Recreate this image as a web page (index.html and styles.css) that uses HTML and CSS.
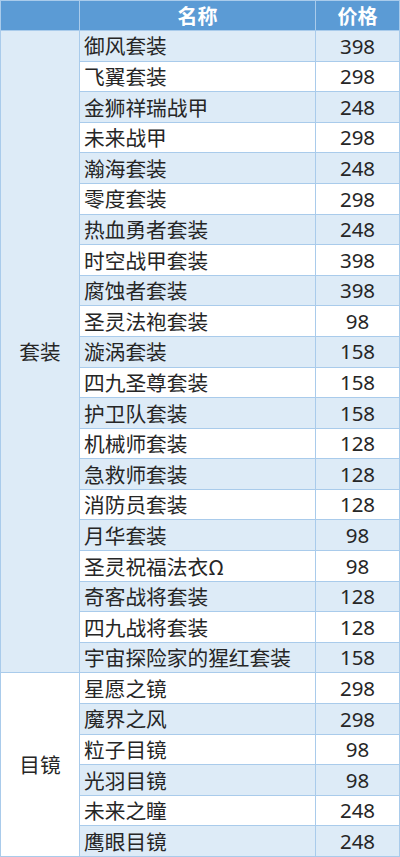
FILE: index.html
```html
<!DOCTYPE html>
<html lang="zh-CN">
<head>
<meta charset="utf-8">
<title>价格表</title>
<link rel="stylesheet" href="styles.css">
</head>
<body>
<div class="table">
  <div class="cell head"></div>
  <div class="cell head center">名称</div>
  <div class="cell head center">价格</div>

  <div class="cell group fill g1">套装</div>
  <div class="cell name fill">御风套装</div><div class="cell price fill">398</div>
  <div class="cell name">飞翼套装</div><div class="cell price">298</div>
  <div class="cell name fill">金狮祥瑞战甲</div><div class="cell price fill">248</div>
  <div class="cell name">未来战甲</div><div class="cell price">298</div>
  <div class="cell name fill">瀚海套装</div><div class="cell price fill">248</div>
  <div class="cell name">零度套装</div><div class="cell price">298</div>
  <div class="cell name fill">热血勇者套装</div><div class="cell price fill">248</div>
  <div class="cell name">时空战甲套装</div><div class="cell price">398</div>
  <div class="cell name fill">腐蚀者套装</div><div class="cell price fill">398</div>
  <div class="cell name">圣灵法袍套装</div><div class="cell price">98</div>
  <div class="cell name fill">漩涡套装</div><div class="cell price fill">158</div>
  <div class="cell name">四九圣尊套装</div><div class="cell price">158</div>
  <div class="cell name fill">护卫队套装</div><div class="cell price fill">158</div>
  <div class="cell name">机械师套装</div><div class="cell price">128</div>
  <div class="cell name fill">急救师套装</div><div class="cell price fill">128</div>
  <div class="cell name">消防员套装</div><div class="cell price">128</div>
  <div class="cell name fill">月华套装</div><div class="cell price fill">98</div>
  <div class="cell name">圣灵祝福法衣Ω</div><div class="cell price">98</div>
  <div class="cell name fill">奇客战将套装</div><div class="cell price fill">128</div>
  <div class="cell name">四九战将套装</div><div class="cell price">128</div>
  <div class="cell name fill">宇宙探险家的猩红套装</div><div class="cell price fill">158</div>

  <div class="cell group g2">目镜</div>
  <div class="cell name">星愿之镜</div><div class="cell price">298</div>
  <div class="cell name fill">魔界之风</div><div class="cell price fill">298</div>
  <div class="cell name">粒子目镜</div><div class="cell price">98</div>
  <div class="cell name fill">光羽目镜</div><div class="cell price fill">98</div>
  <div class="cell name">未来之瞳</div><div class="cell price">248</div>
  <div class="cell name fill">鹰眼目镜</div><div class="cell price fill">248</div>
</div>
</body>
</html>
```
FILE: styles.css
```css
html, body {
  margin: 0;
  padding: 0;
  background: #ffffff;
}

.table {
  box-sizing: border-box;
  width: 400px;
  height: 857px;
  display: grid;
  grid-template-columns: 78px 235px 1fr;
  grid-template-rows: 29px repeat(27, 1fr);
  gap: 1px;
  background: #a9cbeb;
  border: 1px solid #a9cbeb;
  font-family: "Noto Sans CJK SC", "Noto Sans", sans-serif;
  font-size: 20.7px;
  color: #262626;
}

.cell {
  background: #ffffff;
  display: flex;
  align-items: center;
  min-height: 0;
  line-height: 1;
}

.fill {
  background: #ddebf7;
}

.head {
  background: #5b9bd5;
  color: #ffffff;
  font-weight: bold;
  font-size: 20px;
}

.center {
  justify-content: center;
}

.name {
  padding-left: 4px;
}

.price {
  justify-content: center;
  font-family: "Noto Sans", "Noto Sans CJK SC", sans-serif;
  font-size: 20.5px;
}

.group {
  justify-content: center;
}

.g1 {
  grid-row: span 21;
}

.g2 {
  grid-row: span 6;
}
```
